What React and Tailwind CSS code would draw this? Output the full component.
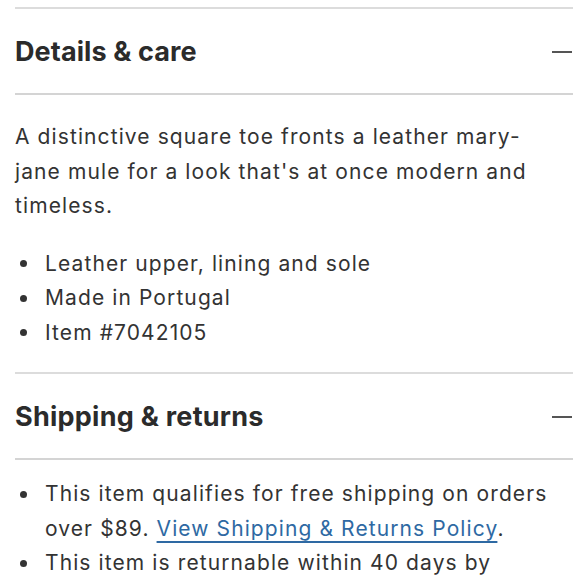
export default function App() {
  const body = "text-[21px] leading-[34.5px] text-[#333] tracking-[1.1px]";
  const Dot = ({ top }) => (
    <span className={`w-[7px] h-[7px] rounded-full bg-[#333] ml-[5px] mr-[18px] shrink-0 ${top ? "mt-[14px]" : ""}`} />
  );
  return (
    <div className="w-[580px] h-[580px] overflow-hidden bg-white" style={{ fontFamily: "Inter, 'Noto Sans', sans-serif" }}>
      <div className="ml-[15px] mr-[7px] pt-[7px]">
        <div className="border-t-2 border-[#dcdcdc]" />
        <div className="flex items-center justify-between h-[86px] border-b-2 border-[#d4d4d4] pt-[2px]">
          <h2 className="text-[27px] font-bold tracking-[0.1px] text-[#2b2b2b]">Details &amp; care</h2>
          <div className="w-[20px] h-[1.5px] bg-[#555] mr-[1px]" />
        </div>
        <p className={`${body} pt-[25px]`}>
          A distinctive square toe fronts a leather mary-
          <br />
          jane mule for a look that's at once modern and
          <br />
          timeless.
        </p>
        <ul className={`${body} pt-[23px]`}>
          {["Leather upper, lining and sole", "Made in Portugal", "Item #7042105"].map((t) => (
            <li key={t} className="flex items-center">
              <Dot />
              {t}
            </li>
          ))}
        </ul>
        <div className="border-t-2 border-[#dcdcdc] mt-[22px]" />
        <div className="flex items-center justify-between h-[86px] border-b-2 border-[#d4d4d4] pt-[2px]">
          <h2 className="text-[27px] font-bold tracking-[0.25px] text-[#2b2b2b]">Shipping &amp; returns</h2>
          <div className="w-[20px] h-[1.5px] bg-[#555] mr-[1px]" />
        </div>
        <ul className={`${body} pt-[17px]`}>
          <li className="flex items-start">
            <Dot top />
            <span>
              This item qualifies for free shipping on orders
              <br />
              over $89.{" "}
              <a className="text-[#2e69a3] underline underline-offset-[5px] decoration-[1.5px]">View Shipping &amp; Returns Policy</a>.
            </span>
          </li>
          <li className="flex items-start">
            <Dot top />
            <span>This item is returnable within 40 days by</span>
          </li>
        </ul>
      </div>
    </div>
  );
}
